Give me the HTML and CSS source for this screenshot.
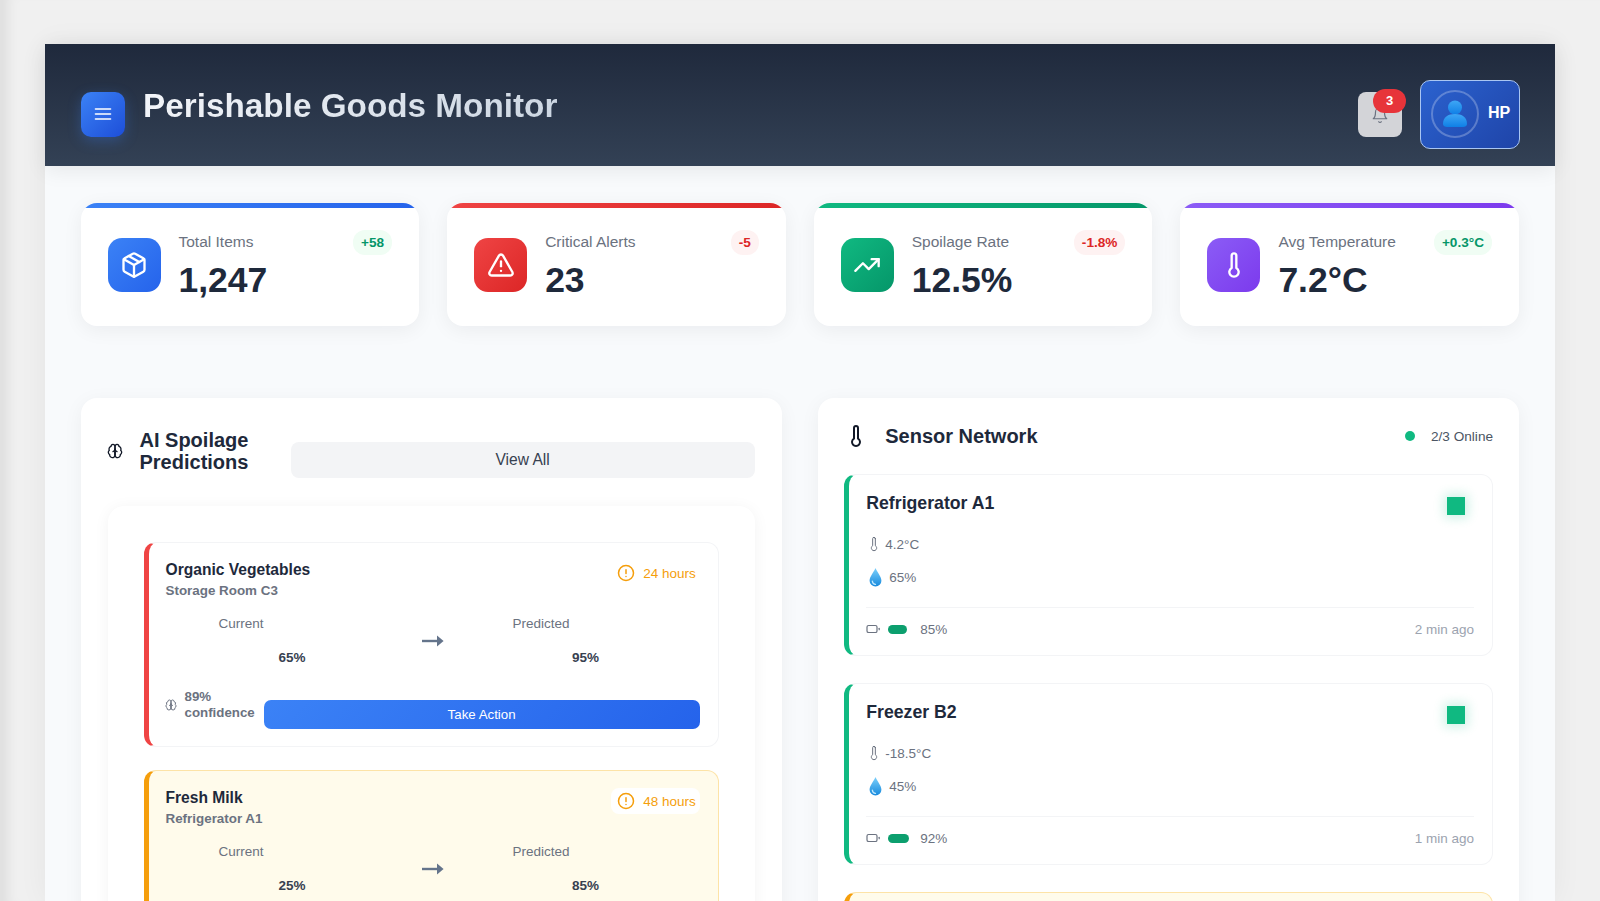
FILE: index.html
```html
<!DOCTYPE html>
<html lang="en">
<head>
<meta charset="utf-8">
<title>Perishable Goods Monitor</title>
<link rel="stylesheet" href="styles.css">
</head>
<body>
<svg class="defs" width="0" height="0" aria-hidden="true">
  <defs>
    <symbol id="i-brain" viewBox="0 0 24 24">
      <path d="M12 5a3 3 0 1 0-5.997.125 4 4 0 0 0-2.526 5.77 4 4 0 0 0 .556 6.588A4 4 0 1 0 12 18Z"/>
      <path d="M12 5a3 3 0 1 1 5.997.125 4 4 0 0 1 2.526 5.77 4 4 0 0 1-.556 6.588A4 4 0 1 1 12 18Z"/>
      <path d="M15 13a4.5 4.5 0 0 1-3-4 4.5 4.5 0 0 1-3 4"/>
      <path d="M12 13v5"/>
    </symbol>
    <symbol id="i-therm" viewBox="0 0 24 24">
      <path d="M14 4v10.54a4 4 0 1 1-4 0V4a2 2 0 0 1 4 0Z"/>
    </symbol>
    <symbol id="i-alert" viewBox="0 0 24 24">
      <circle cx="12" cy="12" r="10"/>
      <line x1="12" y1="7.5" x2="12" y2="12.5"/>
      <line x1="12" y1="16.5" x2="12.01" y2="16.5"/>
    </symbol>
    <symbol id="i-arrow" viewBox="0 0 22 12">
      <path d="M0 6h19" fill="none" stroke="#64748b" stroke-width="2.4"/>
      <path d="M15 .4 21.6 6 15 11.6Z" fill="#64748b" stroke="none"/>
    </symbol>
    <symbol id="i-battery" viewBox="0 0 14 10">
      <rect x="1" y="1.5" width="10" height="7" rx="1.6"/>
      <line x1="13.2" y1="4.3" x2="13.2" y2="5.7"/>
    </symbol>
    <symbol id="i-drop" viewBox="0 0 12 18">
      <path d="M6 0C5 3 .4 8 .4 12a5.6 5.6 0 0 0 11.2 0C11.6 8 7 3 6 0Z" fill="url(#dropFill)" stroke="none"/>
      <path d="M3 12.5c.2 1.8 1.4 2.9 3 3.1" fill="none" stroke="#bfe9ff" stroke-width="1.2" stroke-linecap="round"/>
    </symbol>
    <linearGradient id="dropFill" x1="0" y1="0" x2="0" y2="1">
      <stop offset="0" stop-color="#7cd0fb"/>
      <stop offset="1" stop-color="#1689dd"/>
    </linearGradient>
    <linearGradient id="bustFill" x1="0" y1="0" x2="0" y2="1">
      <stop offset="0" stop-color="#3ea6f5"/>
      <stop offset="1" stop-color="#0f7fe6"/>
    </linearGradient>
  </defs>
</svg>

<div class="app">
  <header class="topbar">
    <div class="brand">
      <button class="menu-btn" type="button" aria-label="Menu">
        <svg class="ico" width="20" height="20" viewBox="0 0 24 24"><line x1="3" y1="6" x2="21" y2="6"/><line x1="3" y1="12" x2="21" y2="12"/><line x1="3" y1="18" x2="21" y2="18"/></svg>
      </button>
      <h1 class="app-title">Perishable Goods Monitor</h1>
    </div>
    <div class="topbar-right">
      <div class="bell">
        <svg class="ico bell-ico" width="18" height="18" viewBox="0 0 24 24"><path d="M6 8a6 6 0 0 1 12 0c0 7 3 9 3 9H3s3-2 3-9"/><path d="M10.3 21a1.94 1.94 0 0 0 3.4 0"/></svg>
        <span class="bell-count">3</span>
      </div>
      <div class="user">
        <span class="avatar">
          <svg width="26" height="28" viewBox="0 0 26 28"><circle cx="13" cy="7.5" r="7" fill="url(#bustFill)"/><path d="M1 24c0-7 5-10 12-10s12 3 12 10c0 2-2 3-4 3H5c-2 0-4-1-4-3Z" fill="url(#bustFill)"/></svg>
        </span>
        <span class="user-name">HP</span>
      </div>
    </div>
  </header>

  <main class="content">
    <section class="stats">
      <div class="stat stat-blue">
        <span class="stat-icon">
          <svg class="ico" width="28" height="28" viewBox="0 0 24 24"><path d="m7.5 4.27 9 5.15"/><path d="M21 8a2 2 0 0 0-1-1.73l-7-4a2 2 0 0 0-2 0l-7 4A2 2 0 0 0 3 8v8a2 2 0 0 0 1 1.73l7 4a2 2 0 0 0 2 0l7-4A2 2 0 0 0 21 16Z"/><path d="m3.3 7 8.7 5 8.7-5"/><path d="M12 22V12"/></svg>
        </span>
        <div class="stat-body">
          <div class="stat-top"><span class="stat-label">Total Items</span><span class="delta up">+58</span></div>
          <div class="stat-value">1,247</div>
        </div>
      </div>
      <div class="stat stat-red">
        <span class="stat-icon">
          <svg class="ico" width="28" height="28" viewBox="0 0 24 24"><path d="m21.73 18-8-14a2 2 0 0 0-3.48 0l-8 14A2 2 0 0 0 4 21h16a2 2 0 0 0 1.73-3"/><path d="M12 9v4"/><path d="M12 17h.01"/></svg>
        </span>
        <div class="stat-body">
          <div class="stat-top"><span class="stat-label">Critical Alerts</span><span class="delta down">-5</span></div>
          <div class="stat-value">23</div>
        </div>
      </div>
      <div class="stat stat-green">
        <span class="stat-icon">
          <svg class="ico" width="28" height="28" viewBox="0 0 24 24"><polyline points="22 7 13.5 15.5 8.5 10.5 2 17"/><polyline points="16 7 22 7 22 13"/></svg>
        </span>
        <div class="stat-body">
          <div class="stat-top"><span class="stat-label">Spoilage Rate</span><span class="delta down">-1.8%</span></div>
          <div class="stat-value">12.5%</div>
        </div>
      </div>
      <div class="stat stat-purple">
        <span class="stat-icon">
          <svg class="ico" width="28" height="28"><use href="#i-therm"/></svg>
        </span>
        <div class="stat-body">
          <div class="stat-top"><span class="stat-label">Avg Temperature</span><span class="delta up">+0.3°C</span></div>
          <div class="stat-value">7.2°C</div>
        </div>
      </div>
    </section>

    <section class="panels">
      <div class="panel">
        <div class="pred-head">
          <svg class="ico brain" width="16" height="16"><use href="#i-brain"/></svg>
          <h2 class="panel-title pred-title">AI Spoilage Predictions</h2>
          <button class="view-all" type="button">View All</button>
        </div>
        <div class="pred-wrap">
          <article class="pred pred-critical">
            <div class="pred-top">
              <div>
                <div class="pred-name">Organic Vegetables</div>
                <div class="pred-place">Storage Room C3</div>
              </div>
              <span class="pred-time"><svg class="ico" width="18" height="18"><use href="#i-alert"/></svg>24 hours</span>
            </div>
            <div class="levels">
              <div class="level level-now"><span class="level-label">Current</span><span class="level-val">65%</span></div>
              <svg class="level-arrow" width="22" height="12"><use href="#i-arrow"/></svg>
              <div class="level level-next"><span class="level-label">Predicted</span><span class="level-val">95%</span></div>
            </div>
            <div class="pred-foot">
              <div class="confidence"><svg class="ico" width="12" height="12"><use href="#i-brain"/></svg><span>89% confidence</span></div>
              <button class="take-action" type="button">Take Action</button>
            </div>
          </article>
          <article class="pred pred-warning">
            <div class="pred-top">
              <div>
                <div class="pred-name">Fresh Milk</div>
                <div class="pred-place">Refrigerator A1</div>
              </div>
              <span class="pred-time"><svg class="ico" width="18" height="18"><use href="#i-alert"/></svg>48 hours</span>
            </div>
            <div class="levels">
              <div class="level level-now"><span class="level-label">Current</span><span class="level-val">25%</span></div>
              <svg class="level-arrow" width="22" height="12"><use href="#i-arrow"/></svg>
              <div class="level level-next"><span class="level-label">Predicted</span><span class="level-val">85%</span></div>
            </div>
          </article>
        </div>
      </div>

      <div class="panel panel-sensors">
        <div class="sensor-head">
          <svg class="ico head-therm" width="24" height="24"><use href="#i-therm"/></svg>
          <h2 class="panel-title">Sensor Network</h2>
          <span class="online"><i class="online-dot"></i>2/3 Online</span>
        </div>
        <div class="sensors">
          <article class="sensor">
            <div class="sensor-top"><h3 class="sensor-name">Refrigerator A1</h3><i class="sensor-state"></i></div>
            <div class="reading"><svg class="ico" width="16" height="16"><use href="#i-therm"/></svg>4.2°C</div>
            <div class="reading reading-hum"><svg width="13" height="19"><use href="#i-drop"/></svg>65%</div>
            <div class="sensor-foot">
              <div class="battery"><svg class="ico" width="14" height="10"><use href="#i-battery"/></svg><span class="battery-track"><i class="battery-bar" style="width: 19px"></i></span>85%</div>
              <span class="seen">2 min ago</span>
            </div>
          </article>
          <article class="sensor">
            <div class="sensor-top"><h3 class="sensor-name">Freezer B2</h3><i class="sensor-state"></i></div>
            <div class="reading"><svg class="ico" width="16" height="16"><use href="#i-therm"/></svg>-18.5°C</div>
            <div class="reading reading-hum"><svg width="13" height="19"><use href="#i-drop"/></svg>45%</div>
            <div class="sensor-foot">
              <div class="battery"><svg class="ico" width="14" height="10"><use href="#i-battery"/></svg><span class="battery-track"><i class="battery-bar" style="width: 21px"></i></span>92%</div>
              <span class="seen">1 min ago</span>
            </div>
          </article>
          <article class="sensor sensor-warn"></article>
        </div>
      </div>
    </section>
  </main>
</div>
</body>
</html>
```

FILE: styles.css
```css
* {
  box-sizing: border-box;
}
html, body {
  margin: 0;
  height: 901px;
  overflow: hidden;
}
body {
  padding: 44px 45px 0;
  background-color: #f0f0f0;
  box-shadow: inset 16px 0 12px -8px rgba(0, 0, 0, 0.07);
  font-family: "Liberation Sans", Arial, sans-serif;
  color: #1e293b;
}
.defs {
  position: absolute;
}
button {
  font-family: inherit;
  border: 0;
}
.ico {
  fill: none;
  stroke: currentColor;
  stroke-width: 2;
  stroke-linecap: round;
  stroke-linejoin: round;
  flex: none;
}
.app {
  height: 857px;
  background-color: #f8fafc;
  box-shadow: 0 0 28px rgba(0, 0, 0, 0.05);
}

/* header */
.topbar {
  display: flex;
  justify-content: space-between;
  align-items: center;
  height: 122px;
  padding: 35px 35px 17px 35.5px;
  background: linear-gradient(180deg, #1f293c, #334155);
  box-shadow: 0 4px 20px rgba(0, 0, 0, 0.08);
  position: relative;
}
.brand, .topbar-right {
  display: flex;
  align-items: center;
}
.menu-btn {
  width: 44px;
  height: 45px;
  padding: 0;
  display: flex;
  align-items: center;
  justify-content: center;
  border-radius: 10px;
  color: #fff;
  background: linear-gradient(135deg, #3b82f6, #1d4ed8);
  box-shadow: 0 4px 14px rgba(59, 130, 246, 0.3);
}
.app-title {
  margin: 0 0 17px 18.5px;
  font-size: 33.3px;
  line-height: 38px;
  font-weight: 700;
  background: linear-gradient(135deg, #f4f6fa, #cbd5e1);
  -webkit-background-clip: text;
  background-clip: text;
  color: transparent;
}
.bell {
  position: relative;
  width: 44px;
  height: 45px;
  margin-right: 18px;
  display: flex;
  align-items: center;
  justify-content: center;
  border-radius: 8px;
  background-color: #d3d4d8;
  color: #6b7280;
}
.bell-ico {
  stroke-width: 1.6;
  margin-top: 2px;
}
.bell-count {
  position: absolute;
  top: -3px;
  right: -4px;
  width: 33px;
  height: 24px;
  border-radius: 12px;
  background-color: #e7343a;
  color: #fff;
  font-size: 13px;
  font-weight: 700;
  line-height: 24px;
  text-align: center;
}
.user {
  display: flex;
  align-items: center;
  width: 100px;
  height: 69px;
  padding-left: 10px;
  border: 1.5px solid #a9c6f3;
  border-radius: 10px;
  background: linear-gradient(135deg, #2b62cf, #1f44a8);
  color: #fff;
}
.avatar {
  width: 48px;
  height: 48px;
  flex: none;
  display: flex;
  align-items: center;
  justify-content: center;
  border: 2px solid rgba(255, 255, 255, 0.25);
  border-radius: 50%;
}
.user-name {
  margin: 0 0 2px 9px;
  font-size: 16px;
  font-weight: 700;
}

/* stat cards */
.content {
  padding: 37px 36px 0 35.5px;
}
.stats {
  display: grid;
  grid-template-columns: repeat(4, 1fr);
  gap: 28px;
}
.stat {
  position: relative;
  display: flex;
  height: 123px;
  padding: 27px;
  overflow: hidden;
  border-radius: 16px;
  background-color: #fff;
  box-shadow: 0 4px 20px rgba(15, 23, 42, 0.06);
}
.stat::before {
  content: "";
  position: absolute;
  top: 0;
  left: 0;
  right: 0;
  height: 5px;
}
.stat-icon {
  width: 53px;
  height: 54px;
  margin: 7.5px 18px 0 0;
  flex: none;
  display: flex;
  align-items: center;
  justify-content: center;
  border-radius: 14px;
  color: #fff;
}
.stat-blue::before, .stat-blue .stat-icon {
  background: linear-gradient(135deg, #3b82f6, #2563eb);
}
.stat-red::before, .stat-red .stat-icon {
  background: linear-gradient(135deg, #ef4444, #dc2626);
}
.stat-green::before, .stat-green .stat-icon {
  background: linear-gradient(135deg, #10b981, #059669);
}
.stat-purple::before, .stat-purple .stat-icon {
  background: linear-gradient(135deg, #8b5cf6, #7c3aed);
}
.stat-body {
  flex: 1;
}
.stat-top {
  display: flex;
  justify-content: space-between;
  align-items: center;
  height: 25px;
}
.stat-label {
  margin-bottom: 1px;
  font-size: 15.5px;
  color: #6b7280;
}
.stat-value {
  margin-top: 5px;
  font-size: 35.5px;
  line-height: 40px;
  font-weight: 700;
}
.delta {
  height: 25px;
  padding: 0 8px;
  border-radius: 12px;
  font-size: 13.6px;
  font-weight: 700;
  line-height: 25px;
}
.delta.up {
  color: #059669;
  background-color: #f0fdf4;
}
.delta.down {
  color: #dc2626;
  background-color: #fef2f2;
}

/* panels */
.panels {
  display: grid;
  grid-template-columns: 1fr 1fr;
  gap: 36px;
  margin-top: 72px;
}
.panel {
  padding: 27px;
  border-radius: 16px;
  background-color: #fff;
  box-shadow: 0 4px 20px rgba(15, 23, 42, 0.05);
  min-height: 600px;
}
.panel-sensors {
  padding: 27px 26px 27px 26.5px;
}
.panel-title {
  margin: 0;
  font-size: 20px;
  line-height: 22px;
  font-weight: 700;
}
.pred-head {
  display: flex;
  align-items: flex-start;
}
.brain {
  margin: 18px 0 0 -1px;
  color: #111827;
}
.pred-title {
  width: 130px;
  margin: 4px 21px 0 17px;
}
.view-all {
  flex: 1;
  height: 36px;
  margin-top: 17px;
  border-radius: 8px;
  background-color: #f3f4f6;
  color: #374151;
  font-size: 15.6px;
}
.pred-wrap {
  margin-top: 28px;
  padding: 36px;
  border-radius: 16px;
  background-color: #fff;
  box-shadow: 0 2px 16px rgba(15, 23, 42, 0.05);
}
.pred {
  margin-bottom: 23px;
  padding: 18px 18px 17px 17px;
  border: 1px solid #f3f4f6;
  border-left-width: 5px;
  border-radius: 12px;
}
.pred-critical {
  border-left-color: #ef4444;
}
.pred-warning {
  background-color: #fffbeb;
  border-color: #fde3a7;
  border-left-color: #f59e0b;
}
.pred-top {
  display: flex;
  justify-content: space-between;
  align-items: flex-start;
  margin-bottom: 16px;
}
.pred-name {
  font-size: 15.6px;
  line-height: 17px;
  font-weight: 700;
}
.pred-place {
  margin-top: 3.5px;
  font-size: 13.4px;
  line-height: 18px;
  font-weight: 700;
  color: #6b7280;
}
.pred-time {
  display: flex;
  align-items: center;
  gap: 8px;
  height: 26px;
  margin-top: -1px;
  padding: 0 4px 0 6px;
  border-radius: 8px;
  background-color: #fff;
  color: #f59e0b;
  font-size: 13.5px;
}
.levels {
  display: grid;
  grid-template-columns: 256px 22px 1fr;
}
.level-arrow {
  margin-top: 19px;
}
.level-label, .level-val {
  display: block;
  line-height: 16px;
}
.level-label {
  font-size: 13.5px;
  color: #6b7280;
}
.level-val {
  margin-top: 18px;
  font-size: 13.5px;
  font-weight: 700;
  color: #374151;
}
.level-now .level-label {
  padding-left: 53px;
}
.level-now .level-val {
  padding-left: 113px;
}
.level-next .level-label {
  padding-left: 69px;
}
.level-next .level-val {
  padding-left: 128.5px;
}
.pred-foot {
  display: flex;
  align-items: flex-start;
  gap: 9px;
  margin-top: 23.5px;
}
.confidence {
  display: flex;
  align-items: center;
  gap: 8px;
  width: 89px;
  flex: none;
  color: #6b7280;
  font-size: 13.3px;
  font-weight: 700;
  line-height: 16px;
}
.confidence .ico {
  margin-left: -1px;
}
.take-action {
  flex: 1;
  height: 29px;
  margin-top: 11px;
  padding-bottom: 2px;
  border-radius: 7px;
  background: linear-gradient(135deg, #3b82f6, #2563eb);
  color: #fff;
  font-size: 13.3px;
}

/* sensors */
.sensor-head {
  display: flex;
  align-items: center;
  height: 22px;
}
.head-therm {
  color: #111827;
  margin-right: 17px;
}
.online {
  display: flex;
  align-items: center;
  margin-left: auto;
  font-size: 13.6px;
  color: #4b5563;
}
.online-dot {
  width: 10px;
  height: 10px;
  margin-right: 16px;
  border-radius: 50%;
  background-color: #10b981;
}
.sensors {
  margin-top: 27px;
}
.sensor {
  height: 182px;
  margin-bottom: 27px;
  padding: 18px 18px 15px 17px;
  border: 1px solid #f3f4f6;
  border-left: 5px solid #10b981;
  border-radius: 12px;
}
.sensor-warn {
  background-color: #fffbeb;
  border-color: #fde3a7;
  border-left-color: #f59e0b;
}
.sensor-top {
  display: flex;
  justify-content: space-between;
  align-items: flex-start;
  height: 22px;
  margin-bottom: 19px;
}
.sensor-name {
  margin: 0;
  font-size: 17.7px;
  line-height: 21px;
  font-weight: 700;
}
.sensor-state {
  width: 18px;
  height: 18px;
  margin: 4px 9px 0 0;
  background-color: #10b981;
  box-shadow: 0 0 11px 3px rgba(16, 185, 129, 0.2);
}
.reading {
  display: flex;
  align-items: center;
  gap: 3px;
  height: 20px;
  font-size: 13.5px;
  color: #6b7280;
}
.reading .ico {
  stroke-width: 1.5;
}
.reading-hum {
  margin-top: 13.5px;
  padding-left: 3px;
  gap: 7px;
}
.sensor-foot {
  display: flex;
  justify-content: space-between;
  align-items: center;
  height: 32px;
  margin-top: 19.5px;
  padding-top: 11px;
  border-top: 1px solid #f3f4f6;
  font-size: 13.5px;
}
.battery {
  display: flex;
  align-items: center;
  color: #6b7280;
}
.battery .ico {
  stroke-width: 1.2;
}
.battery-track {
  width: 21px;
  margin: 0 11px 0 8px;
  display: flex;
}
.battery-bar {
  height: 9px;
  border-radius: 5px;
  background-color: #0c9f6e;
}
.seen {
  color: #9ca3af;
}
```
